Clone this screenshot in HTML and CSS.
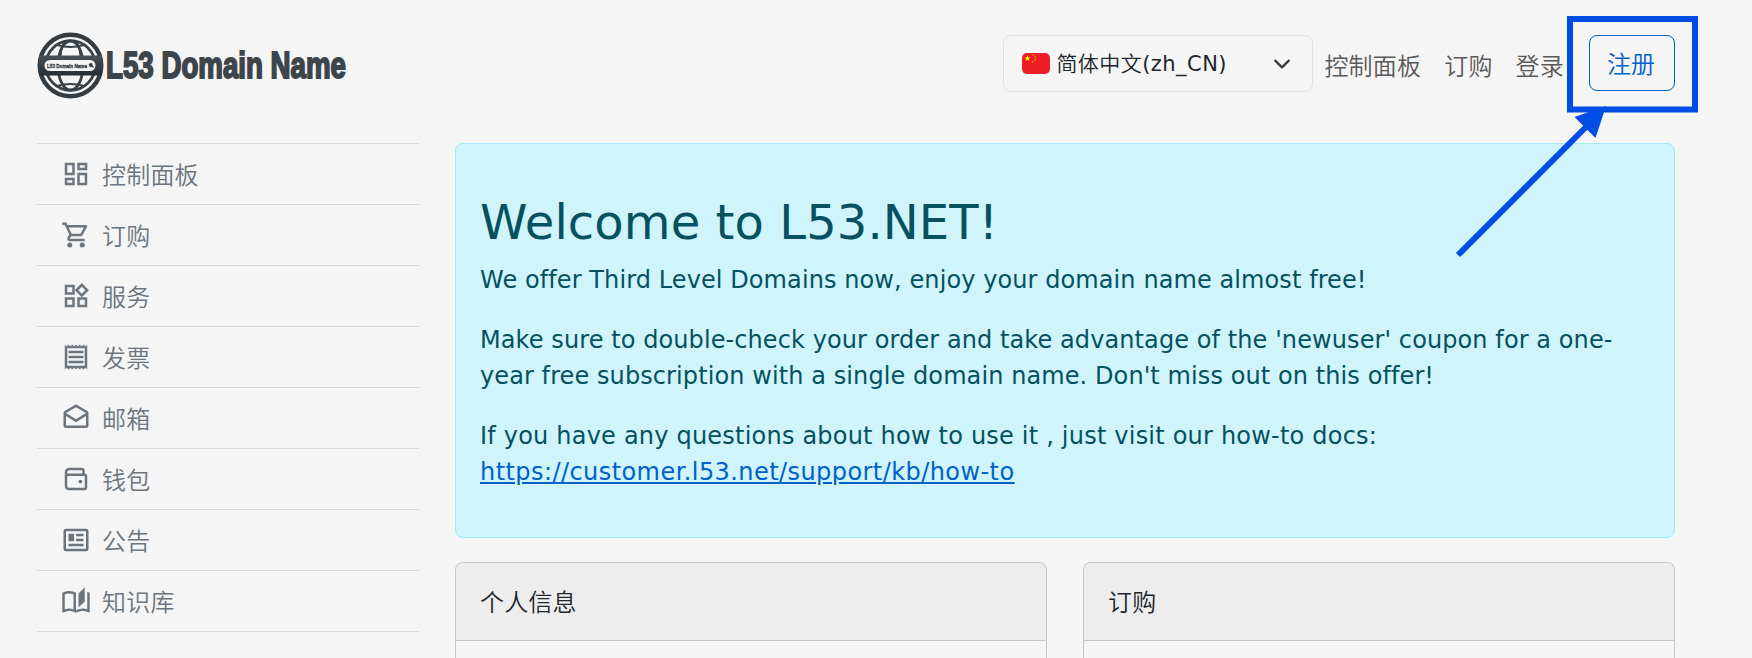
FILE: index.html
```html
<!DOCTYPE html>
<html lang="zh-CN">
<head>
<meta charset="utf-8">
<title>L53 Domain Name</title>
<link rel="stylesheet" href="styles.css">
</head>
<body>
<header class="topbar">
  <a class="brand">
    <svg class="logo" width="340" height="70" viewBox="0 0 340 70">
      <defs>
        <linearGradient id="metal" x1="0" y1="0" x2="0" y2="1">
          <stop offset="0" stop-color="#4a5157"/><stop offset="1" stop-color="#262d33"/>
        </linearGradient>
      </defs>
      <circle cx="33.500" cy="35.500" r="30.800" fill="none" stroke="#343b41" stroke-width="4.400"/>
      <g fill="none" stroke="#394147" stroke-width="2.800">
        <circle cx="33.500" cy="35.500" r="24.800"/>
        <ellipse cx="33.500" cy="35.500" rx="12.500" ry="24.500"/>
        <path d="M27 12q-3 6-3.500 14M40 12q3 6 3.500 14M20 15q13.500 4 27 0M20 56q13.500-4 27 0" stroke-width="2"/>
      </g>
      <rect x="2" y="25.500" width="63" height="20" fill="url(#metal)"/>
      <rect x="7.500" y="30" width="51" height="11" rx="5.500" fill="#f5f5f5"/>
      <text class="logo-small" x="10" y="37.800" textLength="40" lengthAdjust="spacingAndGlyphs">L53 Domain Name</text>
      <circle cx="53.800" cy="35" r="1.900" fill="#30373d"/><path d="M54.500 35.500l2 2" stroke="#30373d" stroke-width="1.300"/>
      <text class="logo-text" x="69" y="47.800" textLength="240" lengthAdjust="spacingAndGlyphs">L53 Domain Name</text>
    </svg>
  </a>
  <div class="select">
    <svg width="28" height="21" viewBox="0 0 28 21">
      <rect width="28" height="21" rx="5" fill="#ee1c25"/>
      <g fill="#ff0"><path d="M5.500 2.200l.75 2.200h2.350l-1.900 1.400.7 2.300-1.900-1.400-1.900 1.400.7-2.300-1.900-1.400h2.350z"/>
      <path d="M10.300 1.600l1.600.2-.8 1.300zM12.600 3.500l1.600.3-1.200 1.200zM12.600 6.300l1.500.6-1.300.8zM10.200 8.300l1.600.4-1 1.200z"/></g>
    </svg>
    <span class="locale"><span class="han">简体中文</span>(zh_CN)</span>
    <svg class="chevron" width="18" height="18" viewBox="0 0 16 16"><path d="m2 5 6 6 6-6" fill="none" stroke="#343a40" stroke-width="2" stroke-linecap="round" stroke-linejoin="round"/></svg>
  </div>
  <nav class="nav"><a>控制面板</a><a>订购</a><a>登录</a></nav>
  <a class="register">注册</a>
</header>

<div class="page">
  <ul class="sidebar">
    <li><svg class="icon" viewBox="0 0 24 24"><path d="M19 5v2h-4V5h4M9 5v6H5V5h4m10 8v6h-4v-6h4M9 17v2H5v-2h4M21 3h-8v6h8V3zM11 3H3v10h8V3zm10 8h-8v10h8V11zm-10 4H3v6h8v-6z"/></svg>控制面板</li>
    <li><svg class="icon" viewBox="0 0 24 24"><path d="M15.550 13c.75 0 1.410-.41 1.750-1.030l3.580-6.490A.996.996 0 0 0 20.010 4H5.210l-.94-2H1v2h2l3.600 7.590-1.350 2.440C4.520 15.370 5.480 17 7 17h12v-2H7l1.100-2h7.450zM6.160 6h12.150l-2.760 5H8.530L6.160 6z"/><circle cx="7" cy="20" r="2"/><circle cx="17" cy="20" r="2"/></svg>订购</li>
    <li><svg class="icon" viewBox="0 0 24 24"><path d="M16.660 4.520l2.830 2.830-2.830 2.830-2.830-2.830 2.830-2.830M9 5v4H5V5h4m10 10v4h-4v-4h4M9 15v4H5v-4h4m7.660-13.310L11 7.340 16.660 13l5.660-5.660-5.660-5.650zM11 3H3v8h8V3zm10 10h-8v8h8v-8zm-10 0H3v8h8v-8z"/></svg>服务</li>
    <li><svg class="icon" viewBox="0 0 24 24"><path d="M19.500 3.500L18 2l-1.500 1.500L15 2l-1.500 1.500L12 2l-1.500 1.500L9 2 7.500 3.500 6 2 4.500 3.500 3 2v20l1.500-1.500L6 22l1.500-1.500L9 22l1.500-1.500L12 22l1.500-1.500L15 22l1.500-1.500L18 22l1.500-1.500L21 22V2l-1.500 1.500zM19 19.090H5V4.910h14v14.180zM6 15h12v2H6zm0-4h12v2H6zm0-4h12v2H6z"/></svg>发票</li>
    <li><svg class="icon" viewBox="0 0 24 24"><path d="M21.990 8c0-.72-.37-1.350-.94-1.700L12 1 2.950 6.300C2.380 6.650 2 7.280 2 8v10c0 1.100.9 2 2 2h16c1.100 0 2-.9 2-2l-.01-10zM20 8v.01L12 13 4 8l8-4.680L20 8zM4 18v-7.660l8 5.020 7.990-4.990L20 18H4z"/></svg>邮箱</li>
    <li><svg class="icon line" viewBox="0 0 24 24"><path d="M18 8V5.500A1.500 1.500 0 0 0 16.500 4H6.500A2.500 2.500 0 0 0 4 6.500V17.500A2.500 2.500 0 0 0 6.500 20H18.500A1.500 1.500 0 0 0 20 18.500V10A1.500 1.500 0 0 0 18.500 8.500H6A2 2 0 0 0 4 10.500"/><circle class="dot" cx="15.500" cy="14" r="1.500"/></svg>钱包</li>
    <li><svg class="icon" viewBox="0 0 24 24"><path fill-rule="evenodd" d="M4 3h16a2 2 0 0 1 2 2v14a2 2 0 0 1-2 2H4a2 2 0 0 1-2-2V5a2 2 0 0 1 2-2zm0 2v14h16V5z"/><path d="M6 7h4.500v6H6zM12 7h6v2h-6zM12 11h6v2h-6zM6 15h12v2H6z"/></svg>公告</li>
    <li><svg class="icon" viewBox="0 0 24 24"><path d="M22.470 5.200C22 4.960 21.510 4.760 21 4.590v14.030C19.860 18.210 18.690 18 17.500 18c-1.900 0-3.780.54-5.500 1.580V5.480C10.380 4.550 8.510 4 6.500 4c-1.790 0-3.480.44-4.970 1.200C1.200 5.360 1 5.710 1 6.080v14.080c0 .58.47.99 1 .99.16 0 .32-.04.48-.12C3.690 20.400 5.050 20 6.500 20c2.070 0 3.980.5 5.500 1.400 1.520-.9 3.430-1.400 5.500-1.400 1.450 0 2.810.4 4.020 1.040.16.080.32.120.48.120.52 0 1-.41 1-.99V6.080c0-.37-.2-.72-.53-.88zM10 18.620C8.860 18.210 7.690 18 6.500 18c-1.190 0-2.360.21-3.500.62V6.710C4.110 6.240 5.280 6 6.500 6c1.200 0 2.390.25 3.500.72v11.900zM19 1l-5 5v11l5-4.500V1z"/></svg>知识库</li>
  </ul>
  <main class="main">
    <section class="alert">
      <h1>Welcome to L53.NET!</h1>
      <p>We offer Third Level Domains now, enjoy your domain name almost free!</p>
      <p>Make sure to double-check your order and take advantage of the 'newuser' coupon for a one-<br>year free subscription with a single domain name. Don't miss out on this offer!</p>
      <p class="docs">If you have any questions about how to use it , just visit our how-to docs:<br><a class="link">https://customer.l53.net/support/kb/how-to</a></p>
    </section>
    <div class="cards">
      <section class="card"><h2>个人信息</h2></section>
      <section class="card"><h2>订购</h2></section>
    </div>
  </main>
</div>

<svg class="callout" width="250" height="250" viewBox="1450 10 250 250">
  <rect x="1570" y="19" width="125" height="90.500" fill="none" stroke="#004de6" stroke-width="6"/>
  <path d="M1458 255L1588 125" stroke="#004de6" stroke-width="6"/>
  <path d="M1606 106L1574.500 117L1595.500 138z" fill="#004de6"/>
</svg>
</body>
</html>
```
FILE: styles.css
```css
* { box-sizing: border-box; }
body {
  margin: 0;
  height: 658px;
  overflow: hidden;
  background: #f5f5f5;
  color: #212529;
  font: 24px/36px "DejaVu Sans", "Noto Sans CJK SC", sans-serif;
}
.topbar {
  display: flex;
  align-items: flex-start;
  height: 143px;
  padding: 35px 77px 0 37px;
}
.brand { margin-top: -5px; margin-right: auto; }
.logo { display: block; overflow: visible; }
.logo-text {
  font: bold 36.5px "Liberation Sans Narrow", "Liberation Sans", sans-serif;
  fill: #3d454b;
  stroke: #3d454b;
  stroke-width: 1.9px;
}
.logo-small {
  font: bold 6px "Liberation Sans Narrow", "Liberation Sans", sans-serif;
  fill: #30373d;
  stroke: #30373d;
  stroke-width: .3px;
}
.select {
  display: flex;
  align-items: center;
  width: 310px;
  height: 57px;
  padding: 0 21px 0 18px;
  border: 1px solid #dee2e6;
  border-radius: 8px;
  font: 21px/32px "DejaVu Sans", "Noto Sans CJK SC", sans-serif;
  letter-spacing: .45px;
}
.locale { margin-left: 6px; }
.han { font-family: "Noto Sans CJK SC", sans-serif; font-weight: 350; line-height: 1; }
.chevron { margin-left: auto; }
.nav {
  display: flex;
  gap: 23px;
  margin: 12px 25px 0 11px;
  color: #595959;
  font-family: "Noto Sans CJK SC", sans-serif;
  font-weight: 350;
  letter-spacing: .2px;
}
.register {
  width: 86px;
  height: 56px;
  padding-right: 2px;
  border: 1px solid #0061c9;
  border-radius: 8px;
  color: #0061c9;
  font-family: "Noto Sans CJK SC", sans-serif;
  font-weight: 350;
  line-height: 53px;
  text-align: center;
}
.page {
  display: grid;
  grid-template-columns: 382px 1220px;
  gap: 36px;
  padding-left: 37px;
}
.sidebar {
  margin: 0;
  padding: 0;
  list-style: none;
  border-top: 1px solid #d9dadb;
  align-self: start;
  color: #6c757d;
  font-family: "Noto Sans CJK SC", sans-serif;
  font-weight: 350;
  letter-spacing: .2px;
}
.sidebar li {
  display: flex;
  align-items: center;
  gap: 11px;
  height: 61px;
  padding-left: 24px;
  border-bottom: 1px solid #d9dadb;
}
.icon { width: 30px; height: 30px; fill: #6c757d; }
.line { fill: none; stroke: #6c757d; stroke-width: 2; }
.dot { fill: #6c757d; stroke: none; }
.alert {
  height: 395px;
  padding: 49px 24px 0;
  border: 1px solid #9eeaf9;
  border-radius: 8px;
  background: #cff4fc;
  color: #055160;
}
.alert h1 { margin: 0 0 11px; font-size: 48px; font-weight: 400; line-height: 58px; letter-spacing: .1px; }
.alert p { margin: 0 0 24px; white-space: nowrap; letter-spacing: .09px; }
.alert .docs { letter-spacing: .21px; }
.link { color: #0061c9; text-decoration: underline; letter-spacing: .43px; }
.cards { display: grid; grid-template-columns: 1fr 1fr; gap: 36px; margin-top: 24px; }
.card {
  height: 96px;
  border: 1px solid #c6c7c8;
  border-bottom: 0;
  border-radius: 8px 8px 0 0;
  overflow: hidden;
}
.card h2 {
  margin: 0;
  height: 78px;
  padding-left: 24px;
  border-bottom: 1px solid #c6c7c8;
  background: #ededed;
  font: 350 24px/75px "Noto Sans CJK SC", sans-serif;
  letter-spacing: .2px;
}
.callout { position: absolute; left: 1450px; top: 10px; }
```
